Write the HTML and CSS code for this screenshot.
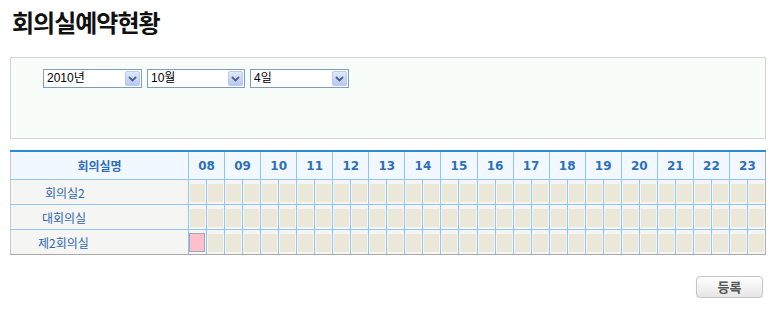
FILE: index.html
```html
<!DOCTYPE html>
<html>

<head>
    <title>회의실예약현황</title>
    <meta charset="UTF-8">
    <link rel="stylesheet" href="styles.css">
</head>

<body>
    <h2 class="page-title">회의실예약현황</h2>

    <div class="search-box">
        <div class="select-box">
            <span class="select-text">2010년</span>
            <span class="select-arrow"><svg width="9" height="6" viewBox="0 0 9 6"><path d="M1 1 L4.5 4.5 L8 1" fill="none" stroke="#4d6185" stroke-width="1.8"/></svg></span>
        </div>
        <div class="select-box">
            <span class="select-text">10월</span>
            <span class="select-arrow"><svg width="9" height="6" viewBox="0 0 9 6"><path d="M1 1 L4.5 4.5 L8 1" fill="none" stroke="#4d6185" stroke-width="1.8"/></svg></span>
        </div>
        <div class="select-box">
            <span class="select-text">4일</span>
            <span class="select-arrow"><svg width="9" height="6" viewBox="0 0 9 6"><path d="M1 1 L4.5 4.5 L8 1" fill="none" stroke="#4d6185" stroke-width="1.8"/></svg></span>
        </div>
    </div>

    <table class="room-table">
        <thead>
            <tr>
                <th class="name-col">회의실명</th>
                <th colspan="2">08</th>
                <th colspan="2">09</th>
                <th colspan="2">10</th>
                <th colspan="2">11</th>
                <th colspan="2">12</th>
                <th colspan="2">13</th>
                <th colspan="2">14</th>
                <th colspan="2">15</th>
                <th colspan="2">16</th>
                <th colspan="2">17</th>
                <th colspan="2">18</th>
                <th colspan="2">19</th>
                <th colspan="2">20</th>
                <th colspan="2">21</th>
                <th colspan="2">22</th>
                <th colspan="2">23</th>
            </tr>
        </thead>
        <tbody id="roomRows">
        </tbody>
    </table>

    <div class="button-row">
        <button class="btn-register">등록</button>
    </div>

    <script src="app.js"></script>
</body>

</html>
```

FILE: app.js
```js
var rooms = [
    { name: "회의실2", booked: [] },
    { name: "대회의실", booked: [] },
    { name: "제2회의실", booked: [0] }
];

var tbody = document.getElementById("roomRows");

rooms.forEach(function (room) {
    var tr = document.createElement("tr");
    var name = document.createElement("td");
    name.className = "name-cell";
    name.textContent = room.name;
    tr.appendChild(name);

    for (var i = 0; i < 32; i++) {
        var td = document.createElement("td");
        td.className = "slot";
        var block = document.createElement("div");
        block.className = room.booked.indexOf(i) >= 0 ? "block booked" : "block";
        td.appendChild(block);
        tr.appendChild(td);
    }
    tbody.appendChild(tr);
});
```

FILE: styles.css
```css
body {
    font-family: "Noto Sans CJK KR", "DejaVu Sans", sans-serif;
    font-size: 12px;
    margin: 0;
    padding: 0 12px 0 10px;
    width: 756px;
    color: #333;
}

.page-title {
    margin: 0;
    padding: 5px 0 0 2px;
    height: 57px;
    box-sizing: border-box;
    font-size: 24px;
    line-height: 34px;
    font-weight: bold;
    color: #111;
    letter-spacing: -1px;
}

.search-box {
    height: 82px;
    box-sizing: border-box;
    border: 1px solid #d4d4d4;
    background-color: #f8fdf9;
    padding: 11px 0 0 32px;
    display: flex;
    gap: 5px;
    align-items: flex-start;
}

.select-box {
    width: 99px;
    height: 19px;
    box-sizing: border-box;
    border: 1px solid #7f9db9;
    background-color: #fff;
    display: flex;
    align-items: center;
    justify-content: space-between;
    padding: 0 1px 0 3px;
}

.select-box:nth-child(2) {
    width: 98px;
}

.select-text {
    font-family: "Liberation Sans", "Noto Sans CJK KR", sans-serif;
    font-size: 12px;
    line-height: 15px;
    color: #000;
}

.select-arrow {
    width: 15px;
    height: 15px;
    box-sizing: border-box;
    border: 1px solid #b8c8ee;
    border-radius: 2px;
    background: linear-gradient(#dfe8fc, #b7c9f2);
    display: flex;
    align-items: center;
    justify-content: center;
}

.room-table {
    margin-top: 11px;
    width: 756px;
    border-collapse: collapse;
    table-layout: fixed;
    border-top: 2px solid #2c8ad6;
    border-left: 1px solid #c8c8c8;
    border-right: 1px solid #b0b0b0;
    border-bottom: 1px solid #a8a8a8;
}

.room-table th {
    height: 27px;
    background-color: #f2f8ff;
    color: #2d6fba;
    font-family: "DejaVu Sans", "Noto Sans CJK KR", sans-serif;
    font-weight: bold;
    font-size: 12px;
    border-left: 1px solid #8ec6f8;
    border-bottom: 1px solid #8ec6f8;
    padding: 0;
}

.room-table th.name-col {
    width: 177px;
    border-left: none;
    font-family: "Noto Sans CJK KR", sans-serif;
}

.room-table td {
    height: 24px;
    padding: 0;
    border-bottom: 1px solid #8ec6f8;
    background-color: #f5f5f3;
}

.room-table tbody tr:last-child td {
    border-bottom-color: #a8a8a8;
}

.name-cell {
    color: #2f66ad;
    font-size: 12px;
    padding-left: 34px !important;
    text-align: left;
}

.room-table tr:nth-child(2) .name-cell {
    padding-left: 31px !important;
}

.room-table tr:nth-child(3) .name-cell {
    padding-left: 27px !important;
}

.slot {
    border-left: 1px solid #8ec6f8;
    vertical-align: top;
}

.block {
    margin: 4px 1px 1px 1px;
    height: 18px;
    background-color: #ebe8d9;
}

.block.booked {
    margin: 3px 1px 1px 0;
    height: 19px;
    box-sizing: border-box;
    background-color: #ffc0cb;
    border: 1px solid #a0a8b4;
}

.button-row {
    display: flex;
    justify-content: flex-end;
    padding: 21px 3px 0 0;
}

.btn-register {
    width: 67px;
    height: 22px;
    border: 1px solid #c4c4c4;
    border-radius: 4px;
    background: linear-gradient(#ffffff, #e6e6e6);
    box-shadow: 0 1px 1px #dcdcdc;
    font-family: "Noto Sans CJK KR", sans-serif;
    font-size: 13px;
    font-weight: bold;
    color: #555;
    padding: 0;
    line-height: 18px;
    cursor: pointer;
}
```
